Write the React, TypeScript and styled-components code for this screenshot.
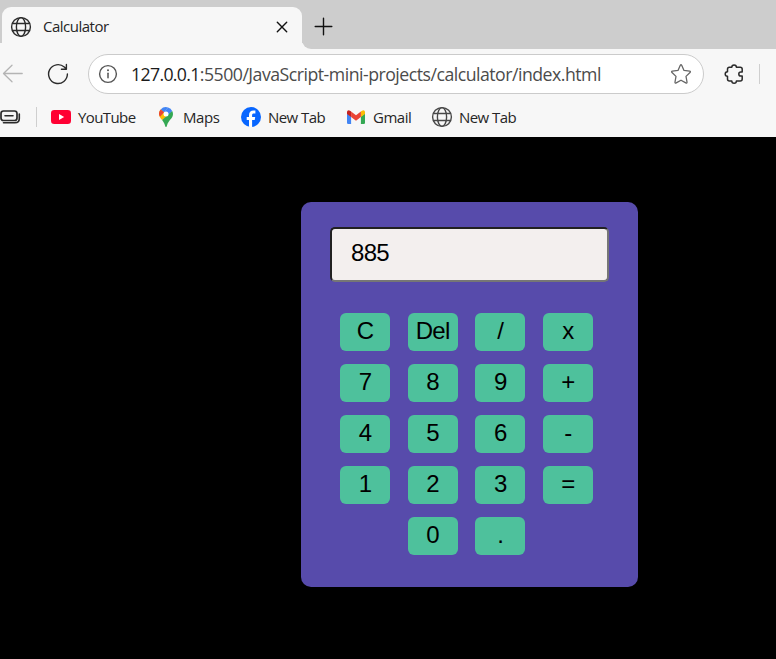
import React, { useState } from "react";
import styled, { createGlobalStyle } from "styled-components";

const GlobalStyle = createGlobalStyle`
  * { box-sizing: border-box; }
  html, body { margin: 0; height: 100%; background: #000; overflow: hidden; }
`;

const Window = styled.div`
  display: flex;
  flex-direction: column;
  width: 776px;
  height: 659px;
  overflow: hidden;
  background: #000;
  font-family: "Open Sans", "Noto Sans", sans-serif;
  color: #262626;
`;

const Chrome = styled.header`
  flex: none;
  height: 137px;
  background: #f7f7f7;
`;

const TabStrip = styled.div`
  display: flex;
  height: 49px;
  padding-left: 2px;
  background: linear-gradient(#cdcdcd 0 43px, #f7f7f7 43px);
`;

const Tab = styled.div`
  display: flex;
  align-items: center;
  width: 300px;
  height: 42px;
  margin-top: 7px;
  padding: 0 14px 3px 8px;
  border-radius: 9px 9px 0 0;
  background: #f7f7f7;
`;

const TabGap = styled.div`
  flex: 1;
  display: flex;
  align-items: center;
  padding: 4px 0 0 12px;
  border-bottom-left-radius: 9px;
  background: #cdcdcd;
`;

const Label = styled.span<{ $size?: number; $tracking?: number }>`
  font-size: ${(p) => p.$size ?? 15}px;
  letter-spacing: ${(p) => p.$tracking ?? 0}px;
  line-height: 20px;
  white-space: nowrap;
`;

const TabTitle = styled(Label)`
  flex: 1;
  margin-left: 11px;
  padding-bottom: 1px;
`;

const Toolbar = styled.div`
  display: flex;
  align-items: center;
  height: 50px;
  padding-left: 2px;
`;

const ReloadSlot = styled.div`
  display: flex;
  margin: 0 19px 0 24px;
`;

const AddressBar = styled.div`
  display: flex;
  align-items: center;
  width: 616px;
  height: 40px;
  padding: 0 11px 0 9px;
  border: 1px solid #cbcbcb;
  border-radius: 20px;
  background: #fff;
`;

const Url = styled.div`
  flex: 1;
  display: flex;
  margin-left: 13px;
  color: #4b4b4b;
`;

const Host = styled(Label)`
  color: #1b1b1b;
`;

const ExtensionSlot = styled.div`
  display: flex;
  margin: 0 15px 0 20px;
`;

const Divider = styled.div`
  width: 1px;
  height: 20px;
  background: #cfcfcf;
`;

const Bookmarks = styled.nav`
  display: flex;
  align-items: center;
  height: 36px;
`;

const Bookmark = styled.div<{ $gap: number; $width: number; $before: number }>`
  display: flex;
  align-items: center;
  gap: ${(p) => p.$gap}px;
  width: ${(p) => p.$width}px;
  margin-left: ${(p) => p.$before}px;
`;

const BookmarkLabel = styled(Label)`
  padding-bottom: 1px;
`;

const BookmarkRule = styled(Divider)`
  margin-left: 15px;
`;

const Page = styled.main`
  flex: 1;
  padding: 65px 0 0 301px;
  background: #000;
`;

const Calculator = styled.section`
  width: 337px;
  height: 385px;
  padding: 25px 29px 0;
  border-radius: 10px;
  background: #574bab;
`;

const Display = styled.input`
  display: block;
  width: 279px;
  height: 55px;
  padding: 0 18px 3px 19px;
  border: 2px solid;
  border-color: #212121 #767676 #767676 #212121;
  border-radius: 5px;
  outline: none;
  background: #f3efee;
  color: #000;
  font: 24px "Liberation Sans", Arial, sans-serif;
  letter-spacing: -0.7px;
`;

const Keys = styled.div`
  display: grid;
  grid-template-columns: repeat(4, 50px);
  grid-auto-rows: 38px;
  gap: 13px 17.67px;
  margin: 31px 0 0 10px;
`;

const Key = styled.button<{ $column?: number }>`
  grid-column: ${(p) => p.$column ?? "auto"};
  display: flex;
  align-items: center;
  justify-content: center;
  padding: 0 0 2px;
  border: 0;
  border-radius: 6px;
  background: #4ec19c;
  color: #000;
  font: 24px "Liberation Sans", Arial, sans-serif;
  letter-spacing: -0.7px;
`;

const Icon = styled.svg`
  display: block;
  flex: none;
  fill: none;
  stroke: #2b2b2b;
  stroke-width: 1.4;
  stroke-linecap: round;
  stroke-linejoin: round;
`;

const GlobeIcon = ({ color }: { color: string }) => (
  <Icon width="22" height="22" viewBox="0 0 22 22">
    <g stroke={color}>
      <circle cx="11" cy="11" r="9.4" />
      <ellipse cx="11" cy="11" rx="4.6" ry="9.4" />
      <path d="M2.6 7.5h16.8M2.6 14.5h16.8" />
    </g>
  </Icon>
);

const CloseIcon = () => (
  <Icon width="12" height="12" viewBox="0 0 12 12">
    <path d="M1.3 1.3l9.4 9.4M10.7 1.3l-9.4 9.4" stroke="#111" />
  </Icon>
);

const PlusIcon = () => (
  <Icon width="19" height="19" viewBox="0 0 19 19">
    <path d="M9.5 1.2v16.6M1.2 9.5h16.6" stroke="#111" />
  </Icon>
);

const BackIcon = () => (
  <Icon width="21" height="20" viewBox="0 0 21 20">
    <path d="M20.2 9.5H1.5M10 1.3L1.5 9.5l8.5 8.2" stroke="#b4b4b4" strokeWidth="1.3" />
  </Icon>
);

const ReloadIcon = () => (
  <Icon width="22" height="22" viewBox="0 0 22 22">
    <path d="M20.4 11A9.4 9.4 0 1 1 17.3 4.1L19.4 6.1M19.4 1.4v4.9h-5" />
  </Icon>
);

const InfoIcon = () => (
  <Icon width="20" height="20" viewBox="0 0 20 20">
    <circle cx="10" cy="10" r="8.4" stroke="#555" />
    <path d="M10 9.2v4.5" stroke="#555" strokeWidth="1.5" />
    <circle cx="10" cy="6.3" r="1" fill="#555" stroke="none" />
  </Icon>
);

const StarIcon = () => (
  <Icon width="22" height="22" viewBox="0 0 22 22">
    <path
      d="M10.3 2.3Q11 1.1 11.7 2.3L14 7.4L19.6 8.2Q21 8.5 20 9.5L16 13.4L17 19Q17.1 20.4 15.8 19.9L11 17.2L6.2 19.9Q4.9 20.4 5 19L6 13.4L2 9.5Q1 8.5 2.4 8.2L8 7.4Z"
      stroke="#666"
      strokeWidth="1.3"
    />
  </Icon>
);

const PuzzleIcon = () => (
  <Icon width="20" height="22" viewBox="0 0 20 22">
    <path
      d="M5 4.300H7.800A2.300 2.300 0 0 1 12.400 4.300H16.200Q18.200 4.300 18.200 6.300V8.900H16.900A2.100 2.100 0 0 0 16.900 13.100H18.200V16Q18.200 18 16.200 18H12.400A2.300 2.300 0 0 1 7.800 18H5.500Q3.500 18 3.500 16V13.300A2.300 2.300 0 0 1 3.500 8.700V6.300Q3.500 4.300 5.500 4.300Z"
      strokeWidth="1.500"
    />
  </Icon>
);

const StackIcon = () => (
  <Icon width="21" height="16" viewBox="0 0 21 16">
    <path d="M3.5 2H14.5Q17 2 17 4.5V9Q17 11.5 14.5 11.5H3.5Q1 11.5 1 9V4.5Q1 2 3.5 2Z" strokeWidth="1.7" />
    <path d="M5 6.8h8M3.500 13.800H15Q19.300 13.800 19.300 9.500V5" strokeWidth="1.6" />
  </Icon>
);

const YouTubeIcon = () => (
  <Icon width="20" height="20" viewBox="0 0 20 20">
    <rect y="3" width="20" height="14" rx="3.3" fill="#ff0033" stroke="none" />
    <path d="M8 7v6l5.200-3z" fill="#fff" stroke="none" />
  </Icon>
);

const MapsIcon = () => (
  <Icon width="14" height="20" viewBox="0 0 14 20">
    <g stroke="none">
      <path d="M1.7 2.5A7 7 0 0 1 9.1.4L4.900 5.400Z" fill="#4285f4" />
      <path d="M9.100.4A7 7 0 0 1 13.200 3.900L9.100 8.800L4.900 5.300Z" fill="#4285f4" />
      <path d="M1.700 2.500L4.900 5.300L9.100 8.800L3.100 13.100C1.600 11.200 0 9.700 0 7C0 5.300.6 3.700 1.700 2.500Z" fill="#fbbc04" />
      <path d="M3.100 13.100L13.200 3.900C13.700 4.800 14 5.900 14 7C14 11.500 9.600 12.900 8 18.500Q7.700 20 7 20T6 18.500C5.300 16.200 4.300 14.700 3.100 13.100Z" fill="#34a853" />
      <path d="M1.700 2.500L5.100 5.300L1 9.800Q0 8.300 0 7C0 5.300.6 3.700 1.700 2.500Z" fill="#ea4335" />
      <circle cx="7" cy="7" r="2.500" fill="#fff" />
    </g>
  </Icon>
);

const FacebookIcon = () => (
  <Icon width="20" height="20" viewBox="0 0 20 20">
    <circle cx="10" cy="10" r="10" fill="#0866ff" stroke="none" />
    <path
      d="M8 19.8V12.9H5.700V9.900H8V8.400C8 5 9.500 3.400 12.600 3.400Q13.700 3.400 14.400 3.600V6.400H12.900C11.500 6.400 11.100 7 11.100 8.300V9.900H14.200L13.700 12.900H11.100V19.900Q9.500 20.100 8 19.800Z"
      fill="#fff"
      stroke="none"
    />
  </Icon>
);

const GmailIcon = () => (
  <Icon width="18" height="14" viewBox="0 0 18 14">
    <g stroke="none">
      <path d="M0 3.400L4.100 6.400V14H1.300Q0 14 0 12.700Z" fill="#4285f4" />
      <path d="M18 3.400L13.900 6.400V14H16.700Q18 14 18 12.700Z" fill="#34a853" />
      <path d="M13.900 1.600L15 .8Q16.500-.2 17.500.8Q18 1.300 18 2.300V4L13.900 7Z" fill="#fbbc04" />
      <path d="M4.100 1.600L3 .8Q1.500-.2.5.8Q0 1.300 0 2.300V4L4.100 7Z" fill="#c5221f" />
      <path d="M4.100 1.600L9 5.300L13.900 1.600V7L9 10.700L4.100 7Z" fill="#ea4335" />
    </g>
  </Icon>
);

const bookmarks = [
  { label: "YouTube", icon: <YouTubeIcon />, before: 14, gap: 7, width: 108, tracking: -0.6 },
  { label: "Maps", icon: <MapsIcon />, before: 0, gap: 10, width: 82, tracking: -0.4 },
  { label: "New Tab", icon: <FacebookIcon />, before: 0, gap: 7, width: 105, tracking: -0.55 },
  { label: "Gmail", icon: <GmailIcon />, before: 1, gap: 8, width: 84, tracking: -0.5 },
  { label: "New Tab", icon: <GlobeIcon color="#484848" />, before: 0, gap: 6, width: 90, tracking: -0.55 },
];

const keys = ["C", "Del", "/", "x", "7", "8", "9", "+", "4", "5", "6", "-", "1", "2", "3", "=", "0", "."];

export default function App() {
  const [value, setValue] = useState("885");

  const press = (key: string) => {
    if (key === "C") return setValue("");
    if (key === "Del") return setValue((v) => v.slice(0, -1));
    if (key === "=") {
      const match = value.match(/^(-?[\d.]+)([+\-x/])([\d.]+)$/);
      if (!match) return;
      const a = Number(match[1]);
      const b = Number(match[3]);
      const results: Record<string, number> = { "+": a + b, "-": a - b, x: a * b, "/": a / b };
      return setValue(String(results[match[2]]));
    }
    setValue((v) => v + key);
  };

  return (
    <Window>
      <GlobalStyle />
      <Chrome>
        <TabStrip>
          <Tab>
            <GlobeIcon color="#2b2b2b" />
            <TabTitle $tracking={-0.5}>Calculator</TabTitle>
            <CloseIcon />
          </Tab>
          <TabGap>
            <PlusIcon />
          </TabGap>
        </TabStrip>
        <Toolbar>
          <BackIcon />
          <ReloadSlot>
            <ReloadIcon />
          </ReloadSlot>
          <AddressBar>
            <InfoIcon />
            <Url>
              <Host $size={17.7} $tracking={-0.65}>127.0.0.1</Host>
              <Label $size={17.7} $tracking={-0.5}>:5500/JavaScript-mini-projects/calculator/index.html</Label>
            </Url>
            <StarIcon />
          </AddressBar>
          <ExtensionSlot>
            <PuzzleIcon />
          </ExtensionSlot>
          <Divider />
        </Toolbar>
        <Bookmarks>
          <StackIcon />
          <BookmarkRule />
          {bookmarks.map((b, i) => (
            <Bookmark key={i} $before={b.before} $gap={b.gap} $width={b.width}>
              {b.icon}
              <BookmarkLabel $tracking={b.tracking}>{b.label}</BookmarkLabel>
            </Bookmark>
          ))}
        </Bookmarks>
      </Chrome>
      <Page>
        <Calculator>
          <Display value={value} readOnly aria-label="Result" />
          <Keys>
            {keys.map((k) => (
              <Key key={k} $column={k === "0" ? 2 : undefined} onClick={() => press(k)}>
                {k}
              </Key>
            ))}
          </Keys>
        </Calculator>
      </Page>
    </Window>
  );
}
